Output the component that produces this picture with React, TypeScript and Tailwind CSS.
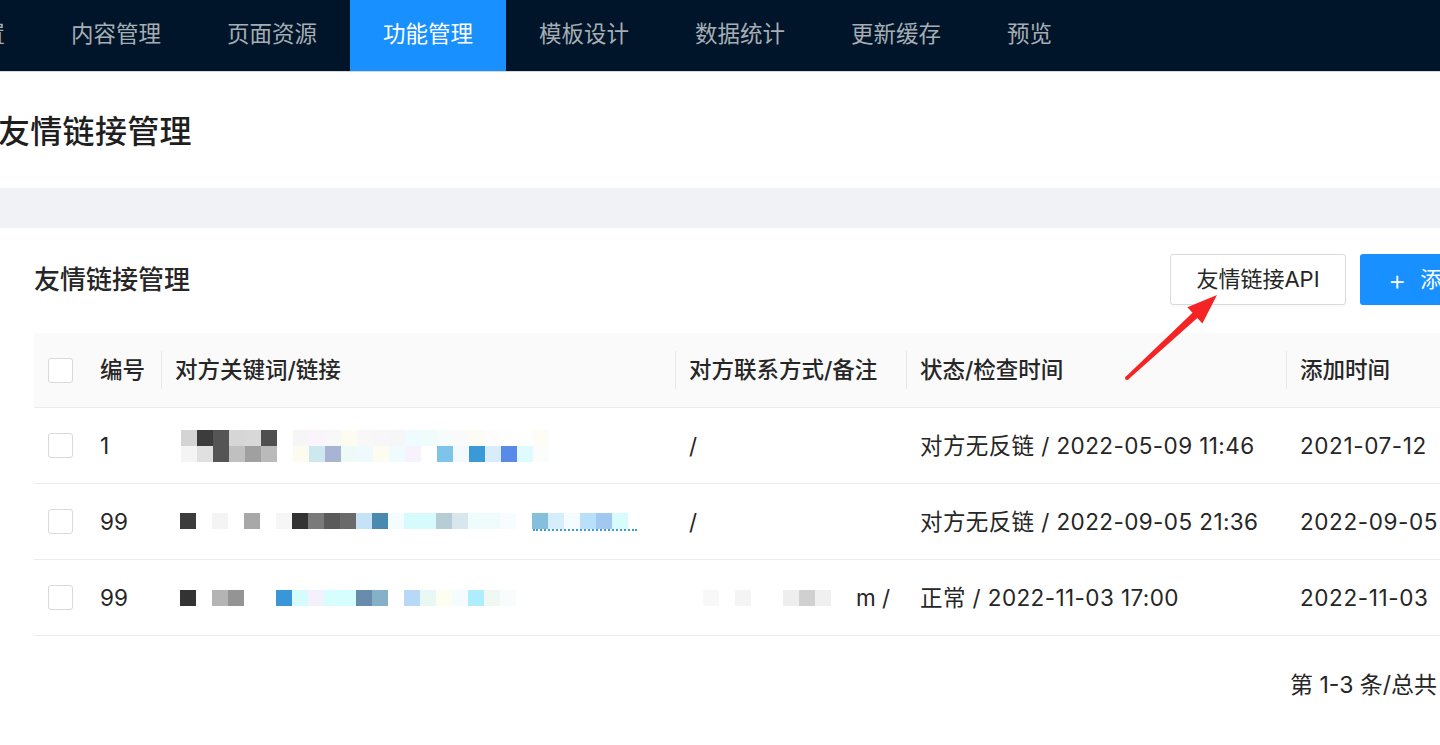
import React from 'react';

const FONT = { fontFamily: 'Inter, "Noto Sans CJK SC", sans-serif' };

const navItems = ['首页设置', '内容管理', '页面资源', '功能管理', '模板设计', '数据统计', '更新缓存', '预览'];

// mosaic cells for the blurred link column (16px squares)
const W = '#ffffff';
const mosaic: { top?: string[]; cells: string[]; dots?: boolean }[] = [
  {
    top: ['#d4d4d4', '#3c3c3c', '#555555', '#d6d6d6', '#d8d8d8', '#4f4f4f', W, '#f6f6f6', '#fbf5fb', '#f8f8f8', '#fcfdf0', '#f8f8f8', '#f9f6f9', '#f6f6f6', '#eefcff', '#f0fcfc', '#f6fbfb', '#fafafa', '#fcfcf4', '#fdfdfd', '#fefefe', W, '#fdfdf6'],
    cells: ['#f4f4f4', '#e0e0e0', '#555555', '#c0c0c0', '#a0a0a0', '#bababa', W, '#fdfaf0', '#cde8ee', '#a9b4d4', '#eefaf5', '#eefafd', '#fcfdf0', '#eefcff', '#f8f2fc', W, '#7ec3ea', '#f4f8ff', '#3a9ad8', '#d8ecfb', '#5a8ae8', '#e0fbff', '#fbfcfc'],
  },
  {
    cells: ['#3c3c3c', W, '#f4f4f4', W, '#a8a8a8', W, '#f6f6f6', '#333333', '#7a7a7a', '#5a5a5a', '#6a6a6a', '#c6e2f6', '#4a8ab0', '#f4fcff', '#d6fbfd', '#d6fbfd', '#b8ccd6', '#d8e6ee', '#eefcfc', '#f0fcfc', '#f8fcff', W, '#84c0dc', '#d6eefc', '#f4fcff', '#b8e0f8', '#a0c8f0', '#d8fcfe'],
    dots: true,
  },
  {
    cells: ['#333333', W, '#b4b4b4', '#949494', W, W, '#3a96d8', '#d6fbfd', '#f4f0fc', '#d6fefe', '#d6fefe', '#6a8cac', '#84b0c8', W, '#b8d8f8', '#e8f8f4', '#fefef0', '#f4fcff', '#aeeefc', '#f0f8f4', '#f8fcfc'],
  },
];

const rows = [
  { id: '1', contact: '/', faint: false, status: '对方无反链 / 2022-05-09 11:46', added: '2021-07-12' },
  { id: '99', contact: '/', faint: false, status: '对方无反链 / 2022-09-05 21:36', added: '2022-09-05' },
  { id: '99', contact: 'm /', faint: true, status: '正常 / 2022-11-03 17:00', added: '2022-11-03' },
];

const cols = 'grid grid-cols-[52px_75px_514px_231px_380px_260px_240px]';

function Checkbox() {
  return <div className="w-[25px] h-[25px] rounded-[3px] border border-[#d9d9d9] bg-white" />;
}

function Mosaic({ m }: { m: (typeof mosaic)[number] }) {
  return (
    <div className="flex flex-col">
      {m.top && (
        <div className="flex">
          {m.top.map((c, i) => (
            <div key={i} className="w-[16px] h-[16px]" style={{ background: c }} />
          ))}
        </div>
      )}
      <div className="flex">
        {m.cells.map((c, i) => (
          <div key={i} className="w-[16px] h-[16px]" style={{ background: c }} />
        ))}
      </div>
      {m.dots && <div className="ml-[353px] w-[104px] h-[2px] border-t-2 border-dotted border-[#3a9ad8]" />}
    </div>
  );
}

export default function App() {
  return (
    <div className="relative w-[1440px] h-[745px] overflow-hidden bg-white text-[#262626]" style={FONT}>
      {/* top nav */}
      <div className="h-[71px] bg-[#001529] flex items-stretch border-b border-[#d5d7dc] box-content">
        <div className="flex -ml-[118px]">
          {navItems.map((t) => (
            <div
              key={t}
              className={
                'w-[156px] pb-[4px] flex items-center justify-center text-[22.5px] whitespace-nowrap ' +
                (t === '功能管理' ? 'bg-[#1890ff] text-white' : 'text-[#a6adb4]')
              }
            >
              <span className={t === '预览' ? 'w-[90px]' : ''}>{t}</span>
            </div>
          ))}
        </div>
      </div>

      {/* page header */}
      <div className="h-[116px] flex items-center bg-white">
        <h1 className="-ml-[2px] pt-[3px] text-[32px] font-medium tracking-[0.3px] text-[#1f1f1f]">友情链接管理</h1>
      </div>

      <div className="h-[40px] bg-[#f0f2f5]" />

      {/* card */}
      <div className="bg-white pt-[26px] pl-[34px]">
        <div className="flex items-center h-[51px] w-[1600px]">
          <div className="text-[26px] font-medium text-[#262626]">友情链接管理</div>
          <div className="ml-[980px] flex gap-[14px]">
            <div className="w-[176px] h-[51px] border border-[#d9d9d9] rounded-[3px] flex items-center justify-center text-[22px] text-[#262626] shadow-[0_2px_0_rgba(0,0,0,0.02)]">
              友情链接API
            </div>
            <div className="h-[51px] bg-[#1890ff] rounded-[3px] flex items-center pl-[28px] pr-[28px] text-[22px] text-white whitespace-nowrap">
              <span className="text-[28px] font-light mr-[14px] leading-none">+</span>添加友情链接
            </div>
          </div>
        </div>

        {/* table */}
        <div className="mt-[28px] w-[1760px] text-[22.5px]">
          <div className={cols + ' h-[75px] bg-[#fafafa] border-b border-[#ececec] items-center font-medium'}>
            <div className="pl-[14px]"><Checkbox /></div>
            <div className="pl-[14px]">编号</div>
            {['对方关键词/链接', '对方联系方式/备注', '状态/检查时间', '添加时间', '操作'].map((h) => (
              <div key={h} className="flex items-center h-full">
                <div className="w-px h-[38px] bg-[#e8e8e8]" />
                <span className="pl-[13px] whitespace-nowrap">{h}</span>
              </div>
            ))}
          </div>
          {rows.map((r, i) => (
            <div key={i} className={cols + ' h-[76px] border-b border-[#ececec] items-center'}>
              <div className="pl-[14px]"><Checkbox /></div>
              <div className="pl-[14px]">{r.id}</div>
              <div className={i === 0 ? 'pl-[20px]' : 'pl-[19px]'}><Mosaic m={mosaic[i]} /></div>
              <div className="pl-[14px] flex items-center whitespace-nowrap">
                {r.faint && (
                  <div className="flex ml-[14px] mr-[9px]">
                    {['#f8f8f8', W, '#f4f4f4', W, W, '#eeeeee', '#d0d0d0', '#f0f0f0', W].map((c, k) => (
                      <div key={k} className="w-[16px] h-[16px]" style={{ background: c }} />
                    ))}
                  </div>
                )}
                <span>{r.contact}</span>
              </div>
              <div className="pl-[14px] whitespace-nowrap tracking-[0.4px]">{r.status}</div>
              <div className="pl-[14px] whitespace-nowrap tracking-[0.6px]">{r.added}</div>
              <div />
            </div>
          ))}
        </div>

        {/* pagination */}
        <div className="mt-[32px] pl-[1256px] whitespace-nowrap text-[23px] text-[#262626]">第 1-3 条/总共 3 条</div>
      </div>

      {/* annotation arrow */}
      <svg className="absolute inset-0 pointer-events-none" width="1440" height="745">
        <polygon
          points="1126,376.4 1192.5,312.8 1187.4,307.3 1217,295 1202.4,323.5 1197.3,318 1128.2,379.6"
          fill="#f52424"
        />
        <circle cx="1127" cy="378" r="2" fill="#f52424" />
      </svg>
    </div>
  );
}
